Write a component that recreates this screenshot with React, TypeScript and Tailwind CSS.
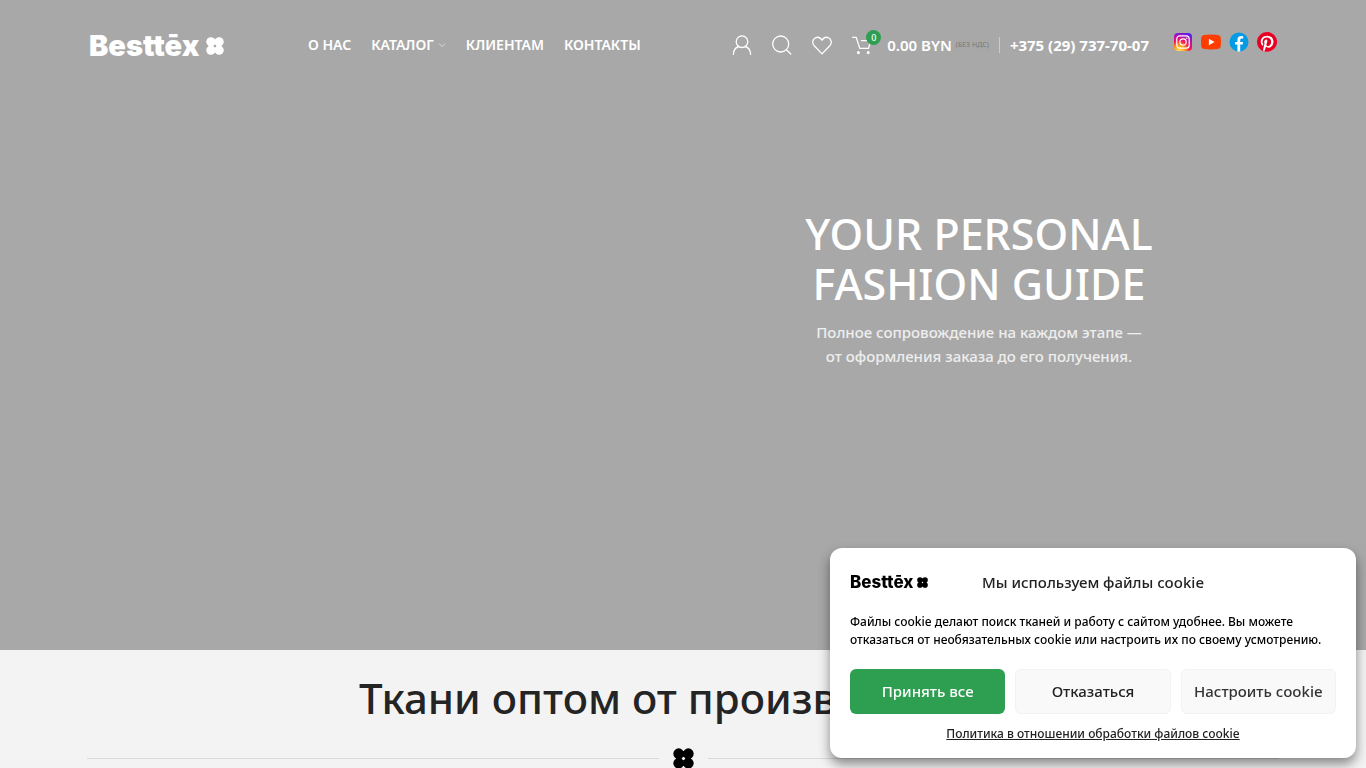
import type { ReactNode } from "react";

const navItems = [
  { title: "О НАС", href: "#about" },
  { title: "КАТАЛОГ", href: "#catalog", dropdown: true },
  { title: "КЛИЕНТАМ", href: "#clients" },
  { title: "КОНТАКТЫ", href: "#contacts" },
];

function Mark({ className }: { className: string }) {
  return (
    <svg viewBox="0 0 20 20" fill="currentColor" className={className} aria-hidden="true">
      <circle cx="5.4" cy="5.4" r="5.1" />
      <circle cx="14.6" cy="5.4" r="5.1" />
      <circle cx="5.4" cy="14.6" r="5.1" />
      <circle cx="14.6" cy="14.6" r="5.1" />
      <circle cx="10" cy="10" r="4.4" fill="none" stroke="currentColor" strokeWidth="5.4" />
    </svg>
  );
}

function LineIcon({ children }: { children: ReactNode }) {
  return (
    <svg
      viewBox="0 0 20 20"
      fill="none"
      stroke="currentColor"
      strokeWidth="1.3"
      strokeLinecap="round"
      strokeLinejoin="round"
      className="h-5 w-5"
      aria-hidden="true"
    >
      {children}
    </svg>
  );
}

function Tools() {
  return (
    <div className="flex items-center gap-5">
      <a href="#account" aria-label="Мой аккаунт">
        <LineIcon>
          <circle cx="10" cy="6.7" r="5.8" />
          <path d="M1.4 19.4C1.6 14.9 3.8 12.3 7 11.5M18.6 19.4C18.4 14.9 16.2 12.3 13 11.5" />
        </LineIcon>
      </a>
      <a href="#search" aria-label="Поиск">
        <LineIcon>
          <circle cx="8.7" cy="9" r="8" />
          <path d="M14.4 14.7L18.8 19" />
        </LineIcon>
      </a>
      <a href="#wishlist" aria-label="Избранное">
        <LineIcon>
          <path d="M10 18.9L2.2 10.8C-.2 8 .6 4.4 3.1 3C5.7 1.6 8.5 2.7 10 5.3C11.5 2.7 14.3 1.6 16.9 3C19.4 4.4 20.2 8 17.8 10.8Z" />
        </LineIcon>
      </a>
      <a href="#cart" className="flex items-center gap-[15px]">
        <span className="relative">
          <LineIcon>
            <path d="M.7 2.4H4.2L7.8 13.4H16.6L18.6 5.6H9.5" />
            <circle cx="6.4" cy="17.6" r="0.9" fill="currentColor" />
            <circle cx="16.2" cy="17.6" r="0.9" fill="currentColor" />
          </LineIcon>
          <span className="absolute -top-[5px] left-3.5 flex h-[15px] w-[15px] items-center justify-center rounded-full bg-[#2e9e51] text-[9px] leading-none font-medium">
            0
          </span>
        </span>
        <span className="flex items-center gap-1 whitespace-nowrap text-[15px] font-semibold">
          0.00 BYN
          <span className="text-[7px] font-normal text-[#777777]">(БЕЗ НДС)</span>
        </span>
      </a>
    </div>
  );
}

function Socials() {
  return (
    <div className="flex items-center gap-2 pr-0.5 pb-1.5">
      <a href="#instagram" aria-label="Instagram">
        <svg viewBox="0 0 20 20" className="h-5 w-5">
          <defs>
            <radialGradient id="insta" cx="0.3" cy="1" r="1.1">
              <stop offset="0" stopColor="#ffe35a" />
              <stop offset="0.3" stopColor="#ff9a1a" />
              <stop offset="0.52" stopColor="#f51852" />
              <stop offset="0.72" stopColor="#c312a8" />
              <stop offset="1" stopColor="#4b1df0" />
            </radialGradient>
          </defs>
          <rect x="1" y="1" width="18" height="18" rx="4" fill="url(#insta)" />
          <rect x="3.8" y="3.8" width="12.4" height="12.4" rx="3" fill="none" stroke="#fff" strokeWidth="1.2" />
          <circle cx="10" cy="10" r="3.2" fill="none" stroke="#fff" strokeWidth="1.2" />
          <circle cx="13.7" cy="6.3" r="0.8" fill="#fff" />
        </svg>
      </a>
      <a href="#youtube" aria-label="YouTube">
        <svg viewBox="0 0 20 20" className="h-5 w-5">
          <path
            d="M3 2.9Q10 2.1 17 2.9Q19.3 3.2 19.7 5.4Q20.2 10 19.7 14.6Q19.3 16.8 17 17.1Q10 17.9 3 17.1Q.7 16.8 .3 14.6Q-.2 10 .3 5.4Q.7 3.2 3 2.9Z"
            fill="#ff3d00"
          />
          <path d="M7.9 6.8L13.5 10L7.9 13.2Z" fill="#fff" />
        </svg>
      </a>
      <a href="#facebook" aria-label="Facebook">
        <svg viewBox="0 0 20 20" className="h-5 w-5">
          <circle cx="10" cy="10" r="9.5" fill="#039be5" />
          <path
            d="M11.2 12.5H13.7L14.1 9.9H11.2V8.5C11.2 7.4 11.5 6.5 12.6 6.5H14.2V4.2C13.9 4.1 13.3 4 12.1 4C9.7 4 8.4 5.2 8.4 8.1V9.9H6V12.5H8.4V19.4H11.2Z"
            fill="#fff"
          />
        </svg>
      </a>
      <a href="#pinterest" aria-label="Pinterest">
        <svg viewBox="0 0 24 24" className="h-5 w-5">
          <circle cx="12" cy="12" r="11.8" fill="#fff" />
          <path
            d="M12 0C5.4 0 0 5.4 0 12c0 5.1 3.2 9.4 7.6 11.2-.1-.9-.2-2.4 0-3.4l1.4-6s-.3-.7-.3-1.8c0-1.7 1-2.9 2.2-2.9 1 0 1.5.8 1.5 1.7 0 1-.7 2.6-1 4-.3 1.2.6 2.2 1.8 2.2 2.1 0 3.8-2.2 3.8-5.5 0-2.9-2.1-4.9-5-4.9-3.4 0-5.4 2.6-5.4 5.2 0 1 .4 2.1.9 2.7.1.1.1.2.1.3l-.3 1.4c-.1.2-.2.3-.4.2-1.5-.7-2.4-2.9-2.4-4.6 0-3.8 2.7-7.3 7.9-7.3 4.1 0 7.4 3 7.4 6.9 0 4.1-2.6 7.4-6.2 7.4-1.2 0-2.4-.6-2.8-1.4l-.7 2.8c-.3 1-1 2.3-1.5 3.1 1.1.3 2.3.5 3.5.5 6.6 0 12-5.4 12-12S18.6 0 12 0z"
            fill="#e60023"
          />
        </svg>
      </a>
    </div>
  );
}

function Header() {
  return (
    <header className="mx-auto flex h-[90px] max-w-[1192px] items-center">
      <a
        href="/"
        className="flex w-[221px] shrink-0 items-center gap-[7px] pl-0.5 font-['Inter',sans-serif] text-[29px] leading-none font-black"
      >
        Besttēx
        <Mark className="mt-0.5 h-[18px] w-[18px]" />
      </a>
      <nav className="flex gap-5 whitespace-nowrap text-[14px] leading-5 font-semibold">
        {navItems.map((item) => (
          <a key={item.title} href={item.href} className="flex items-center gap-1">
            {item.title}
            {item.dropdown && (
              <svg viewBox="0 0 8 8" fill="none" stroke="currentColor" className="h-2 w-2 opacity-60">
                <path d="M1 2.5L4 5.5L7 2.5" />
              </svg>
            )}
          </a>
        ))}
      </nav>
      <div className="ml-auto flex items-center">
        <Tools />
        <a
          href="tel:+375297377007"
          className="mr-6 ml-2.5 border-l border-white/40 pl-2.5 text-[15px] leading-4 font-bold whitespace-nowrap"
        >
          +375 (29) 737-70-07
        </a>
        <Socials />
      </div>
    </header>
  );
}

function CookieBanner() {
  return (
    <div
      role="dialog"
      aria-labelledby="cookie-title"
      className="fixed right-2.5 bottom-2.5 w-[526px] max-w-full rounded-xl bg-white p-5 pb-3.5 text-[#222222] shadow-[0_6px_12px_rgba(0,0,0,0.45)]"
    >
      <div className="grid grid-cols-[1fr_auto_1fr] items-center">
        <div className="flex items-center gap-1 font-['Inter',sans-serif] text-[17px] leading-none font-extrabold text-black">
          Besttēx
          <Mark className="h-[11px] w-[11px]" />
        </div>
        <h2 id="cookie-title" className="text-[15px] leading-7 font-medium">
          Мы используем файлы cookie
        </h2>
      </div>
      <p className="mt-[17px] text-[12px] leading-[18px] font-medium text-black">
        Файлы cookie делают поиск тканей и работу с сайтом удобнее. Вы можете отказаться от необязательных cookie или
        настроить их по своему усмотрению.
      </p>
      <div className="mt-5 grid grid-cols-3 gap-2.5 text-[15px] font-medium">
        <button type="button" className="h-[45px] rounded-md bg-[#2e9e51] text-white">
          Принять все
        </button>
        <button type="button" className="h-[45px] rounded-md border border-[#f2f2f2] bg-[#f9f9f9]">
          Отказаться
        </button>
        <button type="button" className="h-[45px] rounded-md border border-[#f2f2f2] bg-[#f9f9f9] whitespace-nowrap text-[#333333]">
          Настроить cookie
        </button>
      </div>
      <a href="#policy" className="mt-2.5 block text-center text-[12px] leading-5 font-medium underline">
        Политика в отношении обработки файлов cookie
      </a>
    </div>
  );
}

export default function App() {
  return (
    <div className="min-h-screen bg-[#f3f3f3] font-['Noto_Sans',sans-serif]">
      <div className="min-h-[650px] bg-[#a8a8a8] text-white">
        <Header />
        <section className="mx-auto grid max-w-[1192px] grid-cols-2 pt-[119px]">
          <div className="col-start-2 pr-1 text-center">
            <h1 className="text-[43px] leading-[50px] font-medium">
              YOUR PERSONAL
              <br />
              FASHION GUIDE
            </h1>
            <p className="mt-[11px] text-[15px] leading-6 font-medium text-white/80">
              Полное сопровождение на каждом этапе —
              <br />
              от оформления заказа до его получения.
            </p>
          </div>
        </section>
      </div>
      <section className="mx-auto max-w-[1192px] pt-[23px]">
        <h2 className="text-center text-[42px] leading-[50px] font-medium text-[#242424]">
          Ткани оптом от производителя
        </h2>
        <div className="mt-[25px] flex items-center gap-3.5">
          <span className="h-px flex-1 bg-[#d8d8d8]" />
          <Mark className="h-[21px] w-[21px] text-black" />
          <span className="h-px flex-1 bg-[#d8d8d8]" />
        </div>
      </section>
      <CookieBanner />
    </div>
  );
}
